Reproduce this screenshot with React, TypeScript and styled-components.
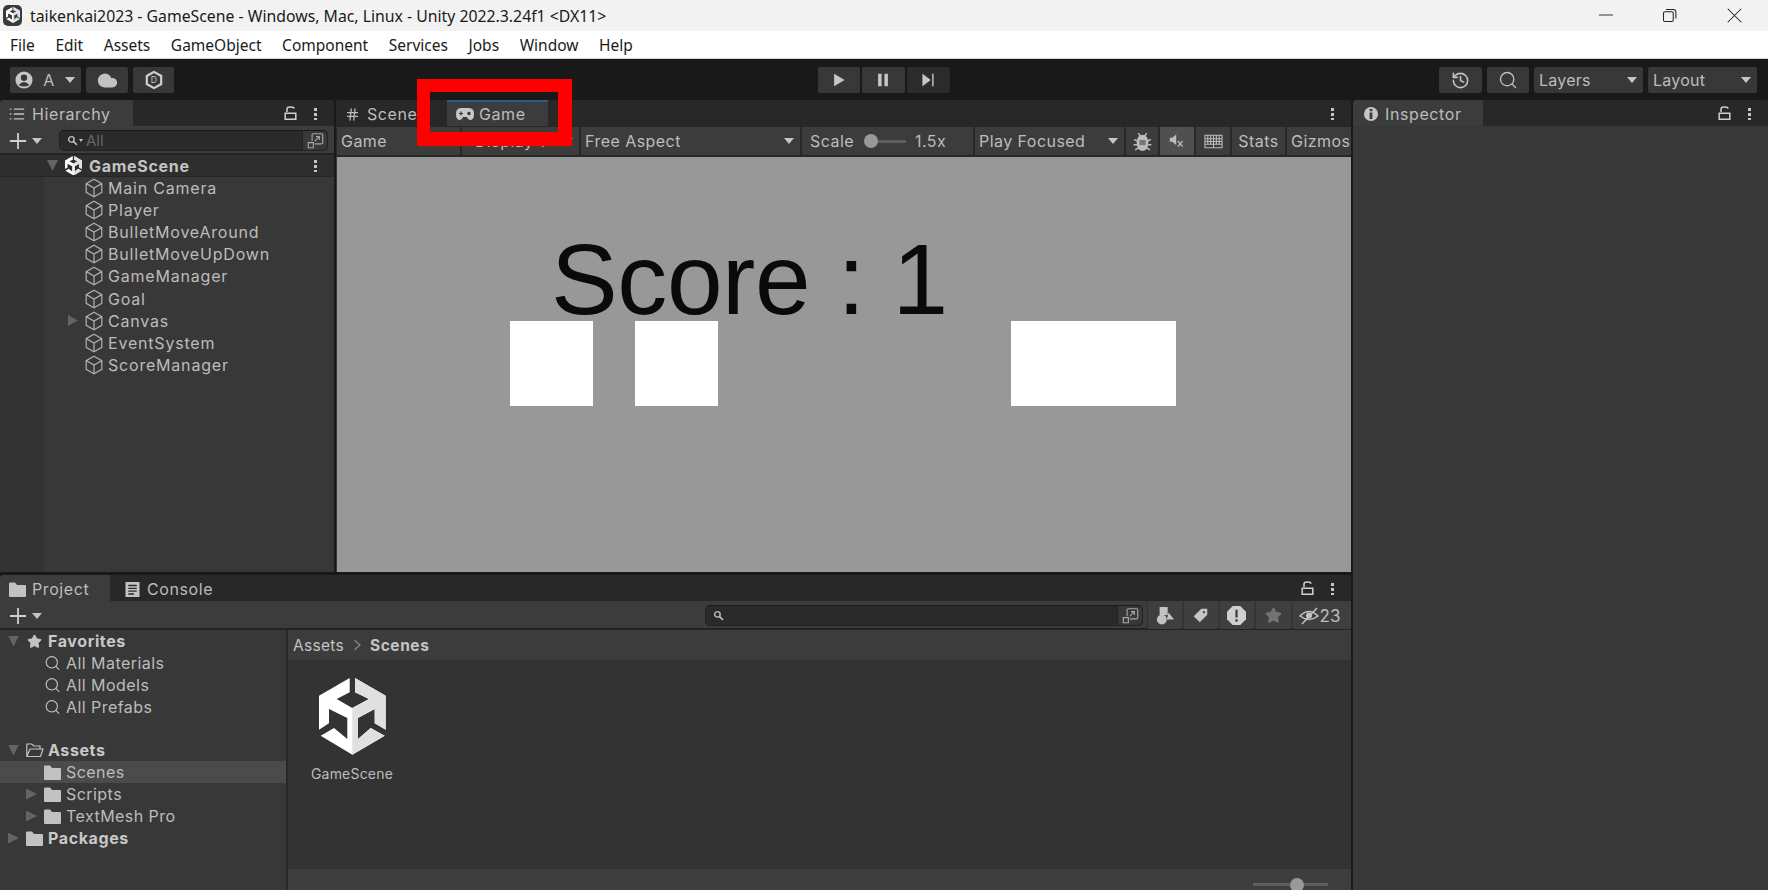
import React from "react";
import styled, { createGlobalStyle } from "styled-components";
import { Search, History, Hash, Star, Cloud } from "lucide-react";

const GlobalStyle = createGlobalStyle`
	html, body {
		margin: 0;
		padding: 0;
		height: 890px;
		overflow: hidden;
		background: #191919;
	}
	* {
		box-sizing: border-box;
	}
`;

const EDITOR_FONT = `Inter, "Liberation Sans", sans-serif`;
const WINDOW_FONT = `"Noto Sans", "Open Sans", sans-serif`;
const TEXT = "#c4c4c4";
const ICON = "#c2c2c2";

const Page = styled.div`
	position: relative;
	width: 1768px;
	height: 890px;
	display: flex;
	flex-direction: column;
	overflow: hidden;
	font-family: ${EDITOR_FONT};
	color: ${TEXT};
`;

const TitleBar = styled.div`
	height: 31px;
	flex: none;
	background: #f2f2f2;
	display: flex;
	align-items: center;
	padding-left: 3px;
	gap: 8px;
	color: #1a1a1a;
	font: 15.8px ${WINDOW_FONT};
`;

const TitleIcon = styled.div`
	width: 19px;
	height: 21px;
	display: flex;
	align-items: center;
	justify-content: center;
	background: #3a3a3a;
	border-radius: 5px;
`;

const TitleText = styled.span`
	flex: 1;
`;

const WindowButton = styled.div<{ $w: number }>`
	width: ${(p) => p.$w}px;
	display: flex;
	justify-content: flex-start;
	color: #222;
`;

const WindowButtons = styled.div`
	display: flex;
	padding-right: 26px;
`;

const MenuBar = styled.div`
	height: 28px;
	flex: none;
	background: #fff;
	display: flex;
	align-items: center;
	padding-left: 10px;
	gap: 20.6px;
	color: #1a1a1a;
	font: 15.5px ${WINDOW_FONT};
	border-bottom: 1px solid #d8d8d8;
`;

const MainToolbar = styled.div`
	height: 41px;
	flex: none;
	display: grid;
	grid-template-columns: 1fr auto 1fr;
	align-items: start;
	padding: 8px 11px 0 10px;
	background: #191919;
`;

const ToolGroup = styled.div<{ $end?: boolean; $gap: number }>`
	display: flex;
	gap: ${(p) => p.$gap}px;
	justify-content: ${(p) => (p.$end ? "flex-end" : "flex-start")};
`;

const ToolButton = styled.div<{ $w: number; $dim?: boolean; $spread?: boolean }>`
	width: ${(p) => p.$w}px;
	height: 26px;
	display: flex;
	align-items: center;
	justify-content: ${(p) => (p.$spread ? "space-between" : "center")};
	padding: ${(p) => (p.$spread ? "0 6px 0 5px" : "0")};
	background: ${(p) => (p.$dim ? "#2b2b2b" : "#383838")};
	border-radius: 2px;
	font-size: 16px;
	letter-spacing: 0.25px;
	color: #bdbdbd;
`;

const Caret = styled.span<{ $size?: number }>`
	width: 0;
	height: 0;
	flex: none;
	border-left: ${(p) => p.$size ?? 5}px solid transparent;
	border-right: ${(p) => p.$size ?? 5}px solid transparent;
	border-top: ${(p) => (p.$size ?? 5) + 1}px solid #c6c6c6;
`;

const TreeArrow = styled.span<{ $open?: boolean; $hidden?: boolean }>`
	width: 11px;
	height: 11px;
	flex: none;
	margin-right: 7px;
	visibility: ${(p) => (p.$hidden ? "hidden" : "visible")};
	background: #646464;
	clip-path: ${(p) =>
		p.$open ? "polygon(0 0, 100% 0, 50% 100%)" : "polygon(0 0, 100% 50%, 0 100%)"};
`;

const Workspace = styled.div`
	flex: 1;
	min-height: 0;
	display: flex;
	gap: 2px;
	background: #191919;
`;

const LeftColumn = styled.div`
	width: 1351px;
	display: flex;
	flex-direction: column;
	gap: 3px;
`;

const UpperRow = styled.div`
	height: 472px;
	display: flex;
	gap: 2px;
`;

const Panel = styled.section<{ $w?: number }>`
	${(p) => (p.$w ? `width: ${p.$w}px;` : "flex: 1;")}
	min-width: 0;
	display: flex;
	flex-direction: column;
	background: #383838;
	border-radius: 4px 4px 0 0;
	overflow: hidden;
`;

const TabBar = styled.div`
	height: 26px;
	flex: none;
	display: flex;
	align-items: stretch;
	background: #282828;
`;

const Tab = styled.div<{ $w: number; $active?: boolean; $accent?: boolean; $gap?: number; $pad?: number }>`
	width: ${(p) => p.$w}px;
	display: flex;
	align-items: center;
	gap: ${(p) => p.$gap ?? 7}px;
	padding-left: ${(p) => p.$pad ?? 9}px;
	font-size: 16px;
	letter-spacing: 0.6px;
	color: #bdbdbd;
	background: ${(p) => (p.$active ? "#3c3c3c" : "transparent")};
	border-top: 2px solid ${(p) => (p.$accent ? "#2c5d87" : "transparent")};
`;

const TabActions = styled.div`
	margin-left: auto;
	display: flex;
	align-items: center;
	gap: 17px;
	padding-right: 17px;
`;

const Kebab = styled.span`
	width: 3px;
	height: 13px;
	flex: none;
	background: radial-gradient(circle at center, #c6c6c6 1.5px, transparent 1.8px) 0 0 / 3px 5px;
`;

const PanelToolbar = styled.div`
	height: 29px;
	flex: none;
	display: flex;
	align-items: center;
	padding-top: 2px;
	background: #3c3c3c;
	border-bottom: 2px solid #232323;
`;

const PlusMenu = styled.div`
	width: 59px;
	flex: none;
	display: flex;
	align-items: center;
	gap: 5px;
	padding-left: 9px;
`;

const SearchField = styled.div<{ $w: number }>`
	width: ${(p) => p.$w}px;
	height: 21px;
	flex: none;
	display: flex;
	align-items: center;
	gap: 1px;
	padding-left: 7px;
	background: #2a2a2a;
	border: 1px solid #222;
	border-top-color: #191919;
	border-radius: 5px;
	color: #666;
	font-size: 15px;
`;

const SearchHint = styled.span`
	margin-left: 2px;
`;

const SearchEnd = styled.div`
	margin-left: auto;
	width: 25px;
	height: 100%;
	display: flex;
	align-items: center;
	justify-content: center;
	background: #383838;
	border-left: 1px solid #222;
	border-radius: 0 5px 5px 0;
`;

const TreeBody = styled.div`
	flex: 1;
	background: linear-gradient(to right, #333 44px, #383838 44px);
`;

const SceneHeader = styled.div`
	height: 22px;
	display: flex;
	align-items: center;
	padding-left: 47px;
	background: #2e2e2e;
	border-bottom: 1px solid #262626;
	font-size: 16px;
	font-weight: 700;
	letter-spacing: 0.7px;
`;

const SceneLogo = styled.span`
	display: flex;
	margin-right: 7px;
`;

const TreeRow = styled.div`
	height: 22.1px;
	display: flex;
	align-items: center;
	padding-left: 68px;
	font-size: 16px;
	letter-spacing: 0.8px;
	color: #bcbcbc;
`;

const RowArrow = styled(TreeArrow)`
	width: 10px;
	margin-right: 6px;
`;

const RowIcon = styled.span`
	display: flex;
	margin-right: 4px;
`;

const GameToolbar = styled.div`
	height: 31px;
	flex: none;
	display: flex;
	gap: 2px;
	padding: 1px 0 2px 1px;
	background: #282828;
`;

const GameButton = styled.div<{ $w: number; $lit?: boolean; $gap?: number; $center?: boolean; $pad?: number }>`
	width: ${(p) => p.$w}px;
	flex: none;
	display: flex;
	align-items: center;
	justify-content: ${(p) => (p.$center ? "center" : "flex-start")};
	gap: ${(p) => p.$gap ?? 0}px;
	padding: ${(p) => (p.$center ? "0" : `0 4px 0 ${p.$pad ?? 4}px`)};
	background: ${(p) => (p.$lit ? "#505050" : "#3c3c3c")};
	font-size: 16px;
	letter-spacing: 0.45px;
	color: #bdbdbd;
	white-space: nowrap;
	overflow: hidden;
`;

const CaretEnd = styled.span`
	margin-left: auto;
	display: flex;
	padding-right: 2px;
`;

const SliderTrack = styled.div<{ $w: number; $knob: number }>`
	position: relative;
	width: ${(p) => p.$w}px;
	height: 3px;
	flex: none;
	background: #5e5e5e;
	&::after {
		content: "";
		position: absolute;
		left: ${(p) => p.$knob}px;
		top: -5.5px;
		width: 14px;
		height: 14px;
		border-radius: 50%;
		background: #999;
	}
`;

const ScaleValue = styled.span`
	margin-left: -2px;
`;

const GameView = styled.div`
	position: relative;
	flex: 1;
	background: #989898;
	margin-left: 1px;
	overflow: hidden;
`;

const ScoreText = styled.div`
	position: absolute;
	left: 214px;
	top: 72px;
	font: 100px/100px "Liberation Sans", sans-serif;
	letter-spacing: -0.4px;
	color: #0a0a0a;
	white-space: nowrap;
`;

const WhiteBox = styled.div<{ $x: number; $w: number }>`
	position: absolute;
	left: ${(p) => p.$x}px;
	top: 164px;
	width: ${(p) => p.$w}px;
	height: 85px;
	background: #fff;
`;

const ProjectPanel = styled(Panel)`
	flex: 1;
`;

const ProjectBody = styled.div`
	flex: 1;
	min-height: 0;
	display: flex;
`;

const ProjectSide = styled.div`
	width: 288px;
	flex: none;
	border-right: 2px solid #282828;
	background: #383838;
`;

const SideRow = styled.div<{ $indent: number; $bold?: boolean; $selected?: boolean; $gapAfter?: boolean }>`
	height: 22px;
	display: flex;
	align-items: center;
	padding-left: ${(p) => p.$indent}px;
	margin-bottom: ${(p) => (p.$gapAfter ? 21 : 0)}px;
	background: ${(p) => (p.$selected ? "#4b4b4b" : "transparent")};
	font-size: 16px;
	font-weight: ${(p) => (p.$bold ? 700 : 400)};
	letter-spacing: ${(p) => (p.$bold ? 0.6 : 0.45)}px;
	color: ${(p) => (p.$bold ? "#c8c8c8" : "#bcbcbc")};
`;

const SideIcon = styled.span`
	width: 17px;
	display: flex;
	justify-content: center;
	margin-right: 5px;
	flex: none;
`;

const ProjectMain = styled.div`
	flex: 1;
	display: flex;
	flex-direction: column;
	min-width: 0;
`;

const Breadcrumb = styled.div`
	height: 30px;
	flex: none;
	display: flex;
	align-items: center;
	gap: 7px;
	padding-left: 5px;
	background: #3c3c3c;
	font-size: 15.5px;
	letter-spacing: 0.3px;
`;

const CrumbBold = styled.span`
	font-weight: 700;
	letter-spacing: 0.55px;
`;

const AssetGrid = styled.div`
	flex: 1;
	padding: 18px 0 0 22px;
	background: #333;
`;

const AssetTile = styled.div`
	width: 84px;
	display: flex;
	flex-direction: column;
	align-items: center;
	gap: 10px;
	font-size: 14px;
	letter-spacing: 0.2px;
	color: #bcbcbc;
`;

const BottomBar = styled.div`
	height: 21px;
	flex: none;
	display: flex;
	align-items: flex-start;
	justify-content: flex-end;
	padding: 14px 23px 0 0;
	background: #3e3e3e;
`;

const ProjectSearch = styled(SearchField)`
	margin-left: 646px;
	margin-right: 5px;
`;

const FilterButton = styled.div<{ $w: number; $shift?: number }>`
	width: ${(p) => p.$w}px;
	height: 27px;
	flex: none;
	display: flex;
	align-items: center;
	justify-content: center;
	margin-right: 3px;
	padding-right: ${(p) => p.$shift ?? 0}px;
	background: #3f3f3f;
	box-shadow: -1px 0 0 #303030;
	font-size: 17px;
	color: #bdbdbd;
	gap: 1px;
`;

const FrameMark = styled.div`
	position: absolute;
	left: 417px;
	top: 79px;
	width: 155px;
	height: 67px;
	border: solid #fe0000;
	border-width: 13px 14px 14px 13px;
	pointer-events: none;
`;

const InspectorTab = styled(Tab)`
	margin-left: -1px;
`;

const Svg: React.FC<{ size: number; h?: number; vb?: string; children: React.ReactNode }> = ({
	size,
	h,
	vb,
	children,
}) => (
	<svg width={size} height={h ?? size} viewBox={vb ?? "0 0 20 20"} style={{ flex: "none", display: "block" }}>
		{children}
	</svg>
);

const UnityLogo: React.FC<{ size: number }> = ({ size }) => (
	<Svg size={size} h={(size * 77) / 67} vb="0 0 67 77">
		<path
			fill="#fff"
			d="M30.7 0 0 17.7V51.7L10 45.3V31L28.3 40V61L15 50 1.7 57.7 33.3 76.7 65.7 57.7 51.7 50 39 61V40L55.7 31V45.3L66.7 51.7V17.7L36 0V14.3L50 21 33.3 30 17.7 21 30.7 14.3Z"
		/>
		<path
			fill="#e0e0e0"
			d="M33.3 30 50 21 36 14.3V0L66.7 17.7V51.7L55.7 45.3V31L39 40V61L51.7 50 65.7 57.7 33.3 76.7Z"
		/>
	</Svg>
);

const CubeIcon = () => (
	<Svg size={20}>
		<path
			fill="none"
			stroke="#adadad"
			strokeWidth="1.25"
			d="M10 1.2 17.8 5.6V14.4L10 18.8 2.2 14.4V5.6ZM2.2 5.6 10 10 17.8 5.6M10 10V18.8"
		/>
	</Svg>
);

const LockIcon = () => (
	<Svg size={13} h={16} vb="0 0 13 16">
		<path fill="none" stroke="#d0d0d0" strokeWidth="1.5" d="M3 7V3.8C3 1.5 10 1.5 10 3.8M1.2 8.2H11.8V14.3H1.2Z" />
	</Svg>
);

const PlusIcon = () => (
	<Svg size={18}>
		<path stroke="#d0d0d0" strokeWidth="2" d="M10 1V19M1 10H19" />
	</Svg>
);

const SmallLens = () => (
	<Svg size={11}>
		<circle cx="8" cy="8" r="5" fill="none" stroke="#bdbdbd" strokeWidth="2.6" />
		<path stroke="#bdbdbd" strokeWidth="3" d="M12 12 18 18" />
	</Svg>
);

const ExpandIcon = () => (
	<Svg size={17}>
		<path
			fill="none"
			stroke="#a8a8a8"
			strokeWidth="1.3"
			d="M6 11V3.5Q6 2 7.5 2H17Q18.5 2 18.5 3.5V12.5Q18.5 14 17 14H9M1.5 12.5H7.5V18.5H1.5ZM9 11 14.5 5.5M10.5 5.5H14.5V9.5"
		/>
	</Svg>
);

const FolderIcon = () => (
	<Svg size={17} vb="0 0 17 15">
		<path fill="#c2c2c2" d="M0 1.5Q0 .5 1 .5H6L8 3H16Q17 3 17 4V14Q17 15 16 15H1Q0 15 0 14Z" />
	</Svg>
);

const OpenFolderIcon = () => (
	<Svg size={18} vb="0 0 18 15">
		<path
			fill="none"
			stroke="#c2c2c2"
			strokeWidth="1.2"
			d="M.8 14V1.5H5.8L7.8 3.5H14V6M.8 14H14.5L17 6.5H4Z"
		/>
	</Svg>
);

const GamepadIcon = () => (
	<Svg size={18} h={12} vb="0 0 18 12">
		<path fill="#c8c8c8" d="M5 0H13Q18 0 18 6 18 12 14 12 12 12 11 9H7Q6 12 4 12 0 12 0 6 0 0 5 0Z" />
		<path stroke="#333" strokeWidth="1.2" d="M3 5.5H7M5 3.5V7.5" />
		<circle cx="13" cy="5.5" r="1.7" fill="#333" />
	</Svg>
);

const WindowIcons = {
	min: (
		<Svg size={14}>
			<path stroke="currentColor" strokeWidth="1.3" d="M0 10H20" />
		</Svg>
	),
	restore: (
		<Svg size={15}>
			<path fill="none" stroke="currentColor" strokeWidth="1.4" d="M2 7Q2 5 4 5H13Q15 5 15 7V16Q15 18 13 18H4Q2 18 2 16ZM5.5 2H15Q18.5 2 18.5 5.5V14" />
		</Svg>
	),
	close: (
		<Svg size={15}>
			<path stroke="currentColor" strokeWidth="1.4" d="M1 1 19 19M19 1 1 19" />
		</Svg>
	),
};

const hierarchyItems = [
	"Main Camera",
	"Player",
	"BulletMoveAround",
	"BulletMoveUpDown",
	"GameManager",
	"Goal",
	"Canvas",
	"EventSystem",
	"ScoreManager",
];

const menuItems = ["File", "Edit", "Assets", "GameObject", "Component", "Services", "Jobs", "Window", "Help"];

const Hierarchy = () => (
	<Panel $w={334}>
		<TabBar>
			<Tab $w={133} $active>
				<Svg size={16}>
					<path stroke="#c2c2c2" strokeWidth="1.6" d="M6 4H19M6 10H19M6 16H19M1 4H3M1 10H3M1 16H3" />
				</Svg>
				Hierarchy
			</Tab>
			<TabActions>
				<LockIcon />
				<Kebab />
			</TabActions>
		</TabBar>
		<PanelToolbar>
			<PlusMenu>
				<PlusIcon />
				<Caret />
			</PlusMenu>
			<SearchField $w={269}>
				<SmallLens />
				<Caret $size={2} />
				<SearchHint>All</SearchHint>
				<SearchEnd>
					<ExpandIcon />
				</SearchEnd>
			</SearchField>
		</PanelToolbar>
		<TreeBody>
			<SceneHeader>
				<TreeArrow $open />
				<SceneLogo>
					<UnityLogo size={17} />
				</SceneLogo>
				GameScene
				<TabActions>
					<Kebab />
				</TabActions>
			</SceneHeader>
			{hierarchyItems.map((name) => (
				<TreeRow key={name}>
					<RowArrow $hidden={name !== "Canvas"} />
					<RowIcon>
						<CubeIcon />
					</RowIcon>
					{name}
				</TreeRow>
			))}
		</TreeBody>
	</Panel>
);

const Game = () => (
	<Panel>
		<TabBar>
			<Tab $w={111}>
				<Hash size={15} strokeWidth={2} />
				Scene
			</Tab>
			<Tab $w={101} $gap={5} $active $accent>
				<GamepadIcon />
				Game
			</Tab>
			<TabActions>
				<Kebab />
			</TabActions>
		</TabBar>
		<GameToolbar>
			<GameButton $w={123}>Game</GameButton>
			<GameButton $w={117} $pad={13}>
				Display 1
				<CaretEnd>
					<Caret />
				</CaretEnd>
			</GameButton>
			<GameButton $w={219}>
				Free Aspect
				<CaretEnd>
					<Caret />
				</CaretEnd>
			</GameButton>
			<GameButton $w={171} $gap={11} $pad={8}>
				Scale
				<SliderTrack $w={41} $knob={-1} />
				<ScaleValue>1.5x</ScaleValue>
			</GameButton>
			<GameButton $w={149}>
				Play Focused
				<CaretEnd>
					<Caret />
				</CaretEnd>
			</GameButton>
			<GameButton $w={32} $center>
				<Svg size={21}>
					<path stroke="#bdbdbd" strokeWidth="1.4" d="M6 2 8 5M14 2 12 5M2 8 5 9.5M18 8 15 9.5M1.5 13H5M18.5 13H15M3 18 6 16M17 18 14 16" />
					<path fill="#bdbdbd" d="M10 3.5Q15.5 4 15.5 11 15.5 18.5 10 19 4.5 18.5 4.5 11 4.5 4 10 3.5Z" />
					<rect x="7" y="8.5" width="6" height="5" fill="#777" />
				</Svg>
			</GameButton>
			<GameButton $w={34} $center $lit>
				<Svg size={16}>
					<path fill="#bdbdbd" d="M1 6H4L9 2V15L4 11H1Z" />
					<path stroke="#bdbdbd" strokeWidth="1.5" d="M11 10 17 17M17 10 11 17" />
				</Svg>
			</GameButton>
			<GameButton $w={34} $center>
				<Svg size={19} h={15} vb="0 0 20 15">
					<path fill="none" stroke="#bdbdbd" strokeWidth="1.1" d="M1 1H19V14H1ZM1 4.5H19M1 7.5H19M1 10.5H19M4 1V10.5M7 1V10.5M10 1V14M13 1V10.5M16 1V10.5" />
				</Svg>
			</GameButton>
			<GameButton $w={53} $center>Stats</GameButton>
			<GameButton $w={64}>Gizmos</GameButton>
		</GameToolbar>
		<GameView>
			<ScoreText>Score : 1</ScoreText>
			<WhiteBox $x={173} $w={83} />
			<WhiteBox $x={298} $w={83} />
			<WhiteBox $x={674} $w={165} />
		</GameView>
	</Panel>
);

const SideEntry: React.FC<{
	indent: number;
	label: string;
	icon: React.ReactNode;
	arrow?: "open" | "closed";
	bold?: boolean;
	selected?: boolean;
	gapAfter?: boolean;
}> = ({ indent, label, icon, arrow, bold, selected, gapAfter }) => (
	<SideRow $indent={indent} $bold={bold} $selected={selected} $gapAfter={gapAfter}>
		<TreeArrow $open={arrow === "open"} $hidden={!arrow} />
		<SideIcon>{icon}</SideIcon>
		{label}
	</SideRow>
);

const Lens = () => <Search size={18} strokeWidth={1.6} color={ICON} />;

const Project = () => (
	<ProjectPanel>
		<TabBar>
			<Tab $w={110} $active $gap={6}>
				<FolderIcon />
				Project
			</Tab>
			<Tab $w={120} $gap={7} $pad={15}>
				<Svg size={15} vb="0 0 15 16">
					<path fill="#c2c2c2" fillRule="evenodd" d="M0 0H15V16H0ZM3 3V4.5H12V3ZM3 6V7.5H12V6ZM3 9V10.5H12V9ZM3 12V13.5H9V12Z" />
				</Svg>
				Console
			</Tab>
			<TabActions>
				<LockIcon />
				<Kebab />
			</TabActions>
		</TabBar>
		<PanelToolbar>
			<PlusMenu>
				<PlusIcon />
				<Caret />
			</PlusMenu>
			<ProjectSearch $w={438}>
				<SmallLens />
				<SearchEnd>
					<ExpandIcon />
				</SearchEnd>
			</ProjectSearch>
			<FilterButton $w={33}>
				<Svg size={18}>
					<rect x="4" y="0" width="9" height="9" fill="#c2c2c2" />
					<circle cx="6.5" cy="14" r="5.5" fill="#c2c2c2" />
					<path fill="#c2c2c2" d="M14 6 20 14H12Z" />
				</Svg>
			</FilterButton>
			<FilterButton $w={33}>
				<Svg size={15}>
					<path fill="#c6c6c6" d="M11 1H19V9L9 19 1 11ZM14.5 4A1.5 1.5 0 1 0 14.6 4Z" />
				</Svg>
			</FilterButton>
			<FilterButton $w={33}>
				<Svg size={19}>
					<path fill="#cfcfcf" d="M6 0H14L20 6V14L14 20H6L0 14V6Z" />
					<path stroke="#3f3f3f" strokeWidth="2.4" d="M10 4V12M10 14V16.5" />
				</Svg>
			</FilterButton>
			<FilterButton $w={34}>
				<Star size={17} fill="#737373" color="#737373" />
			</FilterButton>
			<FilterButton $w={58} $shift={5}>
				<Svg size={20}>
					<path fill="none" stroke="#c2c2c2" strokeWidth="1.5" d="M1 10Q10 1 19 10 10 17 1 10ZM3 18 18 2" />
					<circle cx="10" cy="9.5" r="3" fill="#c2c2c2" />
				</Svg>
				23
			</FilterButton>
		</PanelToolbar>
		<ProjectBody>
			<ProjectSide>
				<SideEntry indent={8} label="Favorites" arrow="open" bold icon={<Star size={15} fill={ICON} color={ICON} />} />
				<SideEntry indent={26} label="All Materials" icon={<Lens />} />
				<SideEntry indent={26} label="All Models" icon={<Lens />} />
				<SideEntry indent={26} label="All Prefabs" icon={<Lens />} gapAfter />
				<SideEntry indent={8} label="Assets" arrow="open" bold icon={<OpenFolderIcon />} />
				<SideEntry indent={26} label="Scenes" selected icon={<FolderIcon />} />
				<SideEntry indent={26} label="Scripts" arrow="closed" icon={<FolderIcon />} />
				<SideEntry indent={26} label="TextMesh Pro" arrow="closed" icon={<FolderIcon />} />
				<SideEntry indent={8} label="Packages" arrow="closed" bold icon={<FolderIcon />} />
			</ProjectSide>
			<ProjectMain>
				<Breadcrumb>
					Assets
					<Svg size={12}>
						<path fill="none" stroke="#8a8a8a" strokeWidth="2" d="M6 2 15 10 6 18" />
					</Svg>
					<CrumbBold>Scenes</CrumbBold>
				</Breadcrumb>
				<AssetGrid>
					<AssetTile>
						<UnityLogo size={67} />
						GameScene
					</AssetTile>
				</AssetGrid>
				<BottomBar>
					<SliderTrack $w={75} $knob={37} />
				</BottomBar>
			</ProjectMain>
		</ProjectBody>
	</ProjectPanel>
);

const App = () => (
	<Page>
		<GlobalStyle />
		<TitleBar>
			<TitleIcon>
				<UnityLogo size={14} />
			</TitleIcon>
			<TitleText>taikenkai2023 - GameScene - Windows, Mac, Linux - Unity 2022.3.24f1 &lt;DX11&gt;</TitleText>
			<WindowButtons>
				<WindowButton $w={63}>{WindowIcons.min}</WindowButton>
				<WindowButton $w={65}>{WindowIcons.restore}</WindowButton>
				<WindowButton $w={15}>{WindowIcons.close}</WindowButton>
			</WindowButtons>
		</TitleBar>
		<MenuBar>
			{menuItems.map((item) => (
				<span key={item}>{item}</span>
			))}
		</MenuBar>
		<MainToolbar>
			<ToolGroup $gap={5}>
				<ToolButton $w={71} $spread>
					<Svg size={18}>
						<circle cx="10" cy="10" r="9.5" fill="#c6c6c6" />
						<circle cx="10" cy="7.5" r="3.5" fill="#383838" />
						<path fill="#383838" d="M4 15.5Q10 9 16 15.5 10 19 4 15.5Z" />
					</Svg>
					A
					<Caret />
				</ToolButton>
				<ToolButton $w={42}>
					<Cloud size={21} fill={ICON} color={ICON} />
				</ToolButton>
				<ToolButton $w={41}>
					<Svg size={18}>
						<path fill="none" stroke="#d0d0d0" strokeWidth="2.4" d="M10 1 18 5.5V14.5L10 19 2 14.5V5.5Z" />
						<text x="10" y="13.5" fontSize="9.5" textAnchor="middle" fill="#c6c6c6" fontFamily="Inter, sans-serif">D</text>
					</Svg>
				</ToolButton>
			</ToolGroup>
			<ToolGroup $gap={2}>
				<ToolButton $w={42}>
					<Svg size={14}>
						<path fill="#c6c6c6" d="M3 1 18 10 3 19Z" />
					</Svg>
				</ToolButton>
				<ToolButton $w={43}>
					<Svg size={14}>
						<path fill="#c6c6c6" d="M3 1H8V19H3ZM12 1H17V19H12Z" />
					</Svg>
				</ToolButton>
				<ToolButton $w={43} $dim>
					<Svg size={14}>
						<path fill="#c6c6c6" d="M2 1 14 10 2 19ZM16 1H18V19H16Z" />
					</Svg>
				</ToolButton>
			</ToolGroup>
			<ToolGroup $gap={5} $end>
				<ToolButton $w={43}>
					<History size={19} color={ICON} strokeWidth={2} />
				</ToolButton>
				<ToolButton $w={42}>
					<Search size={20} color={ICON} strokeWidth={1.6} />
				</ToolButton>
				<ToolButton $w={109} $spread>
					Layers
					<Caret />
				</ToolButton>
				<ToolButton $w={109} $spread>
					Layout
					<Caret />
				</ToolButton>
			</ToolGroup>
		</MainToolbar>
		<Workspace>
			<LeftColumn>
				<UpperRow>
					<Hierarchy />
					<Game />
				</UpperRow>
				<Project />
			</LeftColumn>
			<Panel>
				<TabBar>
					<InspectorTab $w={131} $active $pad={12}>
						<Svg size={14}>
							<circle cx="10" cy="10" r="10" fill="#c6c6c6" />
							<path stroke="#3c3c3c" strokeWidth="4" d="M10 8V17M10 3V6" />
						</Svg>
						Inspector
					</InspectorTab>
					<TabActions>
						<LockIcon />
						<Kebab />
					</TabActions>
				</TabBar>
			</Panel>
		</Workspace>
		<FrameMark />
	</Page>
);

export default App;
